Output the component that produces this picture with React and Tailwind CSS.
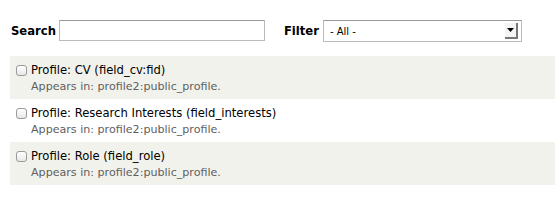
import React from "react";

const fields = [
  { label: "Profile: CV (field_cv:fid)", shaded: true },
  { label: "Profile: Research Interests (field_interests)", shaded: false },
  { label: "Profile: Role (field_role)", shaded: true },
];

const App = () => {
  return (
    <div className="w-[555px] h-[206px] bg-white font-['DejaVu_Sans',sans-serif] text-[#222]">
      {/* Filters */}
      <div className="flex items-start pl-[11px] pt-[20px] h-[56px]">
        <label className="text-[11.6px] font-bold text-black mt-[3px] mr-[3px]">Search</label>
        <input
          type="text"
          className="w-[206px] h-[21px] border border-[#bbb] border-t-[#999] bg-white outline-none"
        />
        <label className="text-[11.6px] font-bold text-black mt-[3px] ml-[19px] mr-[4px]">Filter</label>
        <div className="w-[199px] h-[22px] border border-[#bbb] border-t-[#999] bg-white flex items-center justify-between pl-[6px] pr-[3px]">
          <span className="text-[10px] text-black">- All -</span>
          <div className="w-[13px] h-[16px] bg-[#f4f4f4] border-r-2 border-b-2 border-r-[#777] border-b-[#777] flex items-center justify-center">
            <svg width="7" height="4" viewBox="0 0 7 4">
              <polygon points="0,0 7,0 3.5,4" fill="#000" />
            </svg>
          </div>
        </div>
      </div>

      {/* Field rows */}
      <div className="ml-[10px]">
        {fields.map((f) => (
          <div
            key={f.label}
            className={`h-[43px] pl-[6px] pt-[6px] ${f.shaded ? "bg-[#f2f2ec]" : "bg-white"}`}
          >
            <div className="flex items-center h-[16px]">
              <span className="w-[11px] h-[11px] rounded-[3px] border border-[#9a9a9a] bg-gradient-to-b from-white to-[#e8e8e8] mr-[4px]" />
              <span className="text-[11.6px] leading-[16px] text-black">{f.label}</span>
            </div>
            <div className="pl-[15px] text-[11.1px] leading-[16px] text-[#5f5f5f] mt-[1px]">
              Appears in: profile2:public_profile.
            </div>
          </div>
        ))}
      </div>
    </div>
  );
};

export default App;
